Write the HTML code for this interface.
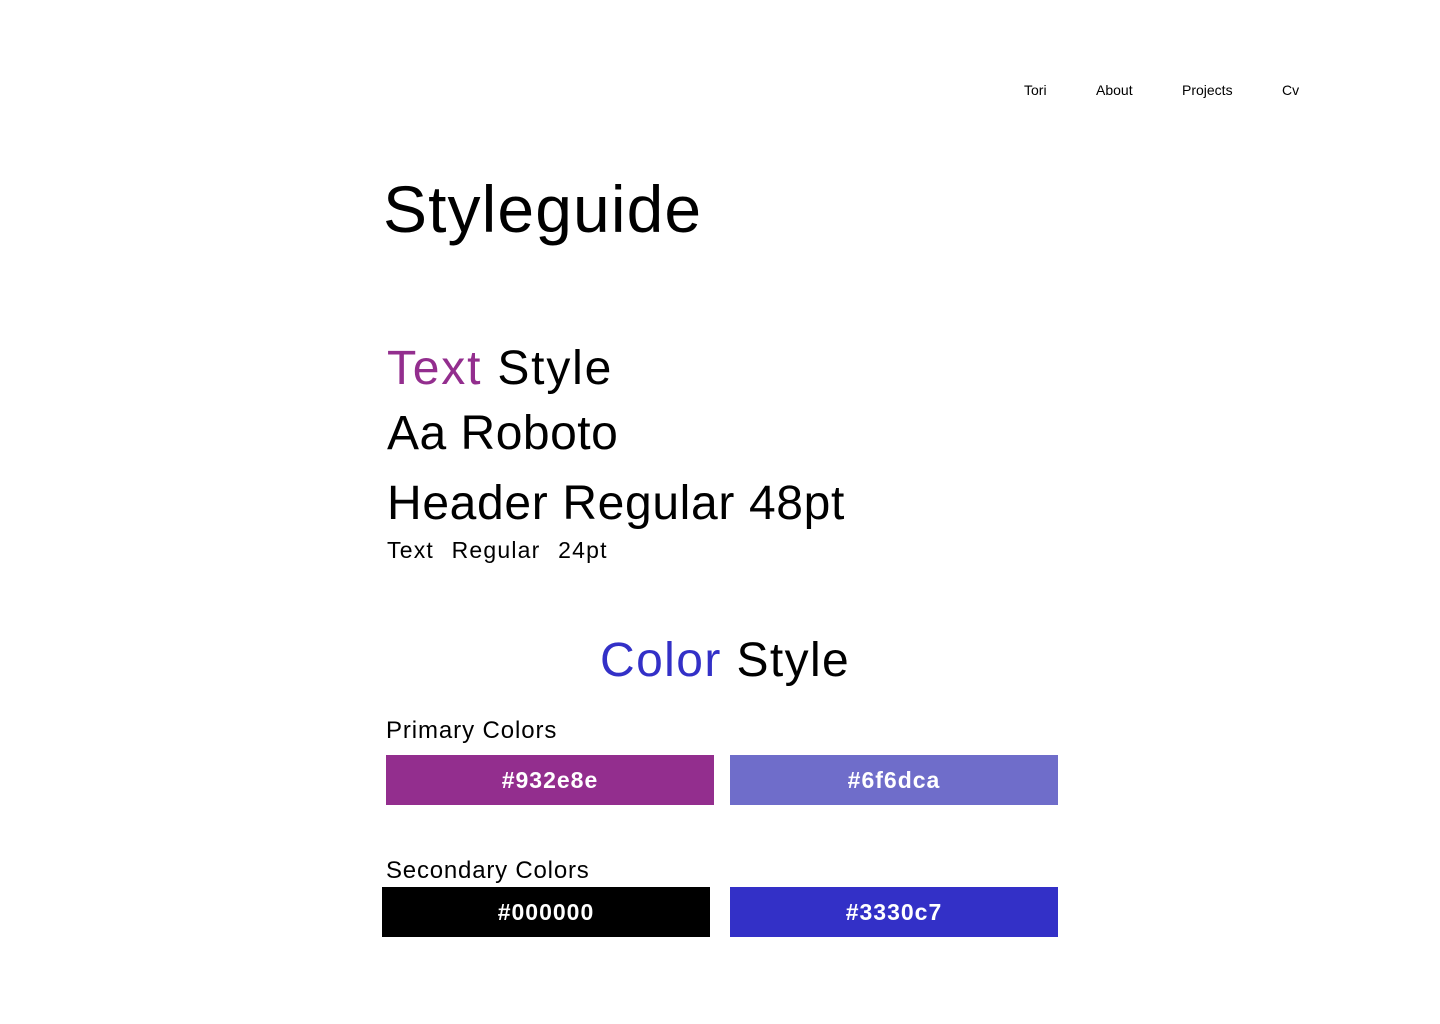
<!DOCTYPE html>
<html><head><meta charset="utf-8"><style>
body{margin:0;width:1440px;height:1024px;background:#fff;position:relative;font-family:"Liberation Sans",Arial,sans-serif;color:#000;overflow:hidden}
.a{position:absolute;line-height:1;white-space:nowrap}
.box{position:absolute;height:50px;color:#fff;font-size:23px;font-weight:bold;display:flex;align-items:center;justify-content:center;letter-spacing:1px}
</style></head><body>
<div class="a" style="left:1024px;top:83px;font-size:14px">Tori</div>
<div class="a" style="left:1096px;top:83px;font-size:14px">About</div>
<div class="a" style="left:1182px;top:83px;font-size:14px">Projects</div>
<div class="a" style="left:1282px;top:83px;font-size:14px">Cv</div>

<div class="a" style="left:383px;top:176px;font-size:66px;letter-spacing:1.1px">Styleguide</div>

<div class="a" style="left:387px;top:345px;font-size:48px;letter-spacing:1.8px"><span style="color:#932e8e">Text</span> Style</div>
<div class="a" style="left:387px;top:410px;font-size:48px;letter-spacing:0.5px">Aa Roboto</div>
<div class="a" style="left:387px;top:480px;font-size:48px;letter-spacing:0.65px">Header Regular 48pt</div>
<div class="a" style="left:387px;top:539px;font-size:23px;letter-spacing:1.2px;word-spacing:10px">Text Regular 24pt</div>

<div class="a" style="left:600px;top:637px;font-size:48px;letter-spacing:1.4px"><span style="color:#3330c7">Color</span> Style</div>

<div class="a" style="left:386px;top:719px;font-size:24px;letter-spacing:0.9px">Primary Colors</div>
<div class="box" style="left:386px;top:755px;width:328px;background:#932e8e">#932e8e</div>
<div class="box" style="left:730px;top:755px;width:328px;background:#6f6dca">#6f6dca</div>

<div class="a" style="left:386px;top:859px;font-size:24px;letter-spacing:0.8px">Secondary Colors</div>
<div class="box" style="left:382px;top:887px;width:328px;background:#000">#000000</div>
<div class="box" style="left:730px;top:887px;width:328px;background:#3330c7">#3330c7</div>
</body></html>
